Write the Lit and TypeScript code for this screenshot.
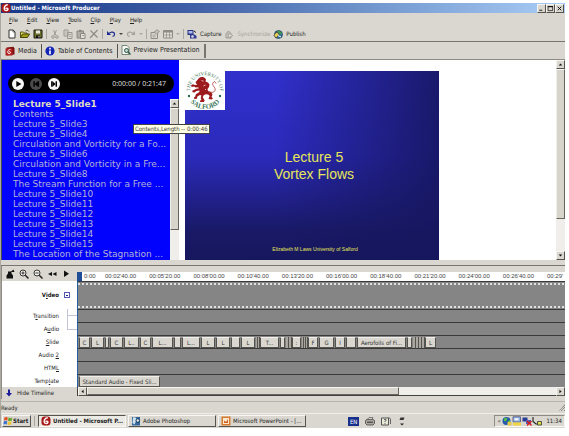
import { LitElement, html, css, svg, nothing } from "lit";
import { customElement, property } from "lit/decorators.js";
import { classMap } from "lit/directives/class-map.js";
import { styleMap } from "lit/directives/style-map.js";

const icons: Record<string, unknown> = {
  app: svg`<rect x="0.5" y="0.5" width="9" height="9" rx="3" fill="#a81818"/><path d="M6.8 1.8C4 2 3 4 3.2 6c.2 2 3.600 2 3.800.2C7 4.800 5 4.800 4.600 5.800" fill="none" stroke="#fff" stroke-width="1.400"/>`,
  doc: svg`<path d="M2 1h4.200L8 3v6H2z" fill="#fff" stroke="#333"/><path d="M6 1v2h2" fill="none" stroke="#333" stroke-width=".7"/>`,
  open: svg`<path d="M.5 8.500V3h3l1 1H7v1.500" fill="#e8e070" stroke="#555510"/><path d="M.5 8.500 2.500 5h7L7.500 8.500z" fill="#a0a018" stroke="#444408"/><path d="M5.500 2C6.500.8 8 1 8.800 2.600" fill="none" stroke="#222" stroke-width=".8"/>`,
  save: svg`<path d="M1 1h8v8H1z" fill="#6a7028" stroke="#1c1c10"/><path d="M3 1.500h4v3H3z" fill="#e8e8e0"/><path d="M3 6.500h4V9H3z" fill="#111"/><path d="M5.500 7h1v1.500h-1z" fill="#ddd"/>`,
  cut: svg`<path d="M3.500 1 6 6.500M6.500 1 4 6.500" stroke="#9d9b94" fill="none"/><circle cx="3" cy="8" r="1.300" fill="none" stroke="#9d9b94"/><circle cx="7" cy="8" r="1.300" fill="none" stroke="#9d9b94"/>`,
  copy: svg`<path d="M1 1h4v6H1zM4.500 3.500H9v6H4.500z" fill="#d9d7cf" stroke="#98968f"/><path d="M2 3h1.500M2 5h1.500M6 5.500h2M6 7.500h2" stroke="#98968f" stroke-width=".7"/>`,
  paste: svg`<path d="M1 2h6.500v7H1z" fill="#b0aea6" stroke="#8a8880"/><path d="M3 .8h2.500v2H3z" fill="#8a8880"/><path d="M4.500 4.500H9v5H4.500z" fill="#e0ded6" stroke="#8a8880"/><path d="M6 6.500h2" stroke="#8a8880" stroke-width=".7"/>`,
  del: svg`<path d="M1.500 1.500 8.500 8.500M8.500 1 1 9" stroke="#8e8c86" stroke-width="1.200"/>`,
  undo: svg`<path d="M1 2v4h4z" fill="#1c2a8c"/><path d="M3 4.500C5 2 8.800 3 8.500 5.500 8.400 6.800 7.500 7.300 6.500 7.500" fill="none" stroke="#1c2a8c" stroke-width="1.200"/>`,
  redo: svg`<path d="M9 2v4H5z" fill="#a3a199"/><path d="M7 4.500C5 2 1.200 3 1.500 5.500 1.600 6.800 2.500 7.300 3.500 7.500" fill="none" stroke="#a3a199" stroke-width="1.200"/>`,
  props: svg`<path d="M1 3.500h6.500v6H1z" fill="#d9d7cf" stroke="#8e8c86"/><path d="M4 3 7 .8 9.500 2.500 6.500 5z" fill="#c5c3bb" stroke="#8e8c86" stroke-width=".8"/><path d="M2.500 6h3M2.500 7.700h3" stroke="#8e8c86" stroke-width=".7"/>`,
  view: svg`<path d="M.5 1.500h9v7.500h-9z" fill="#e2e0d8" stroke="#8e8c86"/><path d="M.5 1.500h9v2h-9z" fill="#8e8c86"/><path d="M3.500 3v6M6.500 3v6M.5 6h9" stroke="#8e8c86" stroke-width=".7"/>`,
  capture: svg`<path d="M.5 1h6v5h-6z" fill="#24307c"/><path d="M1.500 2h4v2.500h-4z" fill="#a8b8f0"/><path d="M3 5.500h4.500L9.500 7v2.500H3z" fill="#303a90"/><circle cx="5.500" cy="7.500" r="1.300" fill="#dde"/><path d="M7 2 9 3.500" stroke="#222"/>`,
  sync: svg`<path d="M2 9V4.500L4.500 2 7 4.500V9z" fill="#c2c0b8" stroke="#a09e96"/><path d="M4.500 4.500 9 6.500 4.500 8.500z" fill="#e4e2da" stroke="#a09e96" stroke-width=".7"/>`,
  publish: svg`<circle cx="5.500" cy="5.500" r="4" fill="#3575a8" stroke="#203848" stroke-width=".7"/><path d="M4 2C6 1 9 3 9 5L6 5.500z" fill="#42944c"/><path d="M.8 6 4 3l2 2.500-3 3.700z" fill="#e9d254" stroke="#333" stroke-width=".7"/><path d="M5 6.500 8 8" stroke="#fff"/>`,
  media: svg`<path d="M1.500 1.500 8.500.8 9.500 2.500v6l-8 1z" fill="#7c1010"/><path d="M.5 2.500h7v7h-7z" fill="#b32020"/><path d="M5.500 3.500C3.500 3.500 2.500 5 2.700 6.500c.3 1.500 2.800 1.300 2.800 0 0-1-1.500-1-1.800-.2" fill="none" stroke="#fff"/>`,
  info: svg`<circle cx="5" cy="5" r="4.600" fill="#1424b4"/><path d="M5 1.800v1.700M5 4.500V8.200" stroke="#fff" stroke-width="1.600"/>`,
  preview: svg`<path d="M1 .5h5L8 2.500v7H1z" fill="#f5f8f5" stroke="#56705c" stroke-width=".8"/><circle cx="5.500" cy="5.500" r="2" fill="#bcd8cc" stroke="#2b5444"/><path d="m7 7 2.500 2.500" stroke="#2b5444" stroke-width="1.300"/>`,
  pin: svg`<path d="M3 2.500h3.500v2L8 6.500v3H1.500v-3L3 4.500z" fill="#111"/><path d="m5.500 3 3-2.500L9.500 3z" fill="#111"/>`,
  zoomin: svg`<circle cx="4" cy="4" r="3" fill="#f2f1ec" stroke="#222" stroke-width=".9"/><path d="m6.300 6.300 3.200 3.200" stroke="#222" stroke-width="1.500"/><path d="M2.400 4h3.200M4 2.400v3.200" stroke="#222" stroke-width=".9"/>`,
  zoomout: svg`<circle cx="4" cy="4" r="3" fill="#f2f1ec" stroke="#222" stroke-width=".9"/><path d="m6.300 6.300 3.200 3.200" stroke="#222" stroke-width="1.500"/><path d="M2.400 4h3.200" stroke="#222" stroke-width=".9"/>`,
  rewind: svg`<path d="M5 3v4L1 5zM9.500 3v4L5.500 5z" fill="#111"/>`,
  fwd: svg`<path d="M3 1.500v6.500L8 4.800z" fill="#111"/>`,
  start: svg`<path d="M1.500 1.500Q3 .6 4.800 1.400L4.300 4.500Q2.500 3.800 1 4.600z" fill="#e2512a"/><path d="M5.500 1.600Q7.500 2.300 9.300 1.400L8.800 4.500Q7 5.400 5 4.700z" fill="#65a935"/><path d="M.9 5.300Q2.500 4.600 4.200 5.200L3.700 8.500Q2 7.700.4 8.500z" fill="#3975d2"/><path d="M4.900 5.400Q6.500 6.200 8.600 5.300L8.100 8.500Q6.500 9.500 4.400 8.600z" fill="#efc435"/>`,
  ps: svg`<path d="M1 1h8v8.500H1z" fill="#34689c"/><path d="M2 1.500C4 .5 6 2 5.500 4L3.500 8.500 1.500 7z" fill="#cfe2f0"/><circle cx="6.800" cy="4.500" r="1.800" fill="#dfe9ef" stroke="#173450"/>`,
  ppt: svg`<path d="M.5.500h9v9h-9z" fill="#d97a2c"/><path d="M2 2h6v6H2z" fill="#fbe9d4"/><path d="M3 7V4.500L5 6l2-3v4z" fill="#d0601c"/>`,
  printer: svg`<path d="M2.500 3.500 4 1.500h4L7 3.500z" fill="#eee" stroke="#555" stroke-width=".7"/><path d="M.5 4.500 2 3.300h6L9.500 4.500v3L8 9H2L.5 7.500z" fill="#aaa89f" stroke="#444" stroke-width=".8"/><path d="M2 6.200h6" stroke="#333"/>`,
  help: svg`<path d="M.5 2h7v7h-7z" fill="#e8ead4" stroke="#555"/><path d="M3 4q.5-1 1.700-.6 1 .8-.7 2v.6M4 7.300v.9" stroke="#445" fill="none"/><path d="M7.500 1 9.500 3v5" fill="none" stroke="#666"/>`,
  more: svg`<path d="M3.500 1.500h4L6.500 4h-4z" fill="#333"/><path d="M3 7.500h4L5 9.500z" fill="#222"/>`,
  globe: svg`<circle cx="4.500" cy="5" r="4" fill="#2457b0"/><path d="M2 2.500Q4 1 5.500 2.500L4 5.500 2 5zM6 5l2-1v3L6 8z" fill="#55bb45"/><path d="M5.500 6H9.500v3.500h-4z" fill="#e6c94b"/>`,
  monitor: svg`<path d="M1 .8h7.500V6H1z" fill="#8cb4e4" stroke="#668"/><path d="M1 6.500h8v3H1z" fill="#efd744"/><path d="M2.500 2h4v2.500h-4z" fill="#e9f1fa"/>`,
  net: svg`<path d="M.5 1.500h5v4h-5z" fill="#283c94"/><path d="M4 4h5v4H4z" fill="#5060b4"/><path d="m5 5 4.500 4.500M9.500 5 5 9.500" stroke="#d81c1c" stroke-width="1.400"/>`,
  plug: svg`<path d="M1 1v4.500L4 8h3" fill="none" stroke="#222" stroke-width="1.100"/><path d="M5.500 5.500h4v3.500h-4z" fill="#dce04c" stroke="#333" stroke-width=".8"/>`,
  play: svg`<circle cx="5" cy="5" r="5" fill="#f6f6f6"/><path d="M3.600 2.400v5.200L7.800 5z" fill="#000"/>`,
  prev: svg`<circle cx="5" cy="5" r="5" fill="#4b4b4b"/><path d="M2.800 2.700h1.200v4.600H2.800zM6.400 2.700h1.200v4.600H6.400z" fill="#000"/><path d="M6.500 2.700v4.600L3.800 5z" fill="#000"/>`,
  next: svg`<circle cx="5" cy="5" r="5" fill="#f6f6f6"/><path d="M2.600 2.700h1.200v4.600H2.600zM6.300 2.700h1.200v4.600H6.300z" fill="#000"/><path d="M3.700 2.700v4.600L6.400 5z" fill="#000"/>`,
  hide: svg`<path d="M4 1.500h2v3.500h2L5 8.500 2 5h2z" fill="#1c1c9c"/>`,
  min: svg`<path d="M2 7.500h4" stroke="#111" stroke-width="1.300"/>`,
  max: svg`<path d="M1.500 2.500h6.500v5.500H1.500z" fill="none" stroke="#111"/><path d="M1 2.200h7.500" stroke="#111" stroke-width="1.400"/>`,
  close: svg`<path d="m2.500 2.500 5 5M7.500 2.500l-5 5" stroke="#111" stroke-width="1.400"/>`,
  up: svg`<path d="M5 3.500 7.500 6.500h-5z" fill="#111"/>`,
  down: svg`<path d="M5 6.500 7.500 3.500h-5z" fill="#111"/>`,
  left: svg`<path d="M3.500 5 6.500 2.500v5z" fill="#111"/>`,
  right: svg`<path d="M6.500 5 3.500 2.500v5z" fill="#111"/>`,
};

@customElement("px-icon")
class PxIcon extends LitElement {
  @property() name = "";
  static styles = css`
    :host { display: inline-flex; flex: none; width: 10px; height: 10px; }
    svg { width: 100%; height: 100%; display: block; }
  `;
  render() {
    return html`<svg viewBox="0 0 10 10" aria-hidden="true">${icons[this.name]}</svg>`;
  }
}

@customElement("salford-crest")
class SalfordCrest extends LitElement {
  static styles = css`
    :host { display: block; width: 40px; height: 39px; background: #fff; }
    svg { display: block; width: 100%; height: 100%; }
    text { font-family: "Liberation Serif", serif; fill: #3f7a5c; }
  `;
  render() {
    return html`<svg viewBox="0 0 40 39" role="img" aria-label="University of Salford">
      <defs>
        <path id="top" d="M5.500 23A15 15 0 1 1 34.500 23"/>
        <path id="bottom" d="M3 24A17 14 0 0 0 37 24"/>
      </defs>
      <text font-size="5"><textPath href="#top" startOffset="50%" text-anchor="middle">THE UNIVERSITY OF</textPath></text>
      <text font-size="7" font-weight="bold"><textPath href="#bottom" startOffset="50%" text-anchor="middle">SALFORD</textPath></text>
      <circle cx="4" cy="25" r="1.200" fill="#2f6a4c"/><circle cx="35" cy="25" r="1.200" fill="#2f6a4c"/>
      <path d="M14 7l2-1 2 0 2 1 1 1.500-.5 2 2.500 1 1.500 2-.5 2.500-1.500 2 .5 2 3 1 1.500 2.500-1 2.500 1.500 1.500-1.500 1-3-.5.500-1.500.7-1.500-1.500-1.500-2.500-.3-2 1-1 2 1 1.500 1 2-1 1.200-3.500 0-.3-1.200 1.500-.6-.7-2 .7-2.700-1.500-.3-2.500 1.500-.5 2.200-2.500.3-.5-1.300 1.300-1.200.7-2.300 3.500-2.200 0-1.500-3 .5-2 1.500-1.800-.3-.4-1.600 1.700-.7 2.300-1.300 2.500-.2-.5-1.200-2.500.2-1.500-1-2.500.5-.7-1.500 1.700-1.300 2.500.8 2-.3-1-1.300-.7-1.200z" fill="#9c1a1d"/>
      <path d="M24 21c5 1.500 7.500-1.500 5.500-4.500s-3-4 0-6l1.500 2" fill="none" stroke="#b04a48" stroke-width=".9"/>
      <path d="M16.500 9.500l2 .7M18.500 15l2-1M20 18l1 1" stroke="#fff" stroke-width=".7"/>
    </svg>`;
  }
}

const menus = ["File", "Edit", "View", "Tools", "Clip", "Play", "Help"];

const slides = [
  "Lecture 5_Slide1", "Contents", "Lecture 5_Slide3", "Lecture 5_Slide4",
  "Circulation and Vorticity for a Fo...", "Lecture 5_Slide6",
  "Circulation and Vorticity in a Fre...", "Lecture 5_Slide8",
  "The Stream Function for a Free ...", "Lecture 5_Slide10",
  "Lecture 5_Slide11", "Lecture 5_Slide12", "Lecture 5_Slide13",
  "Lecture 5_Slide14", "Lecture 5_Slide15", "The Location of the Stagnation ...",
];

const marks = ["02'40.00", "05'20.00", "08'00.00", "10'40.00", "13'20.00", "16'00.00", "18'40.00", "21'20.00", "24'00.00", "26'40.00", "29'"];

/** Clips of the slide track: caption and length on the time scale. */
const clips: [string, number][] = [
  ["C", 12], ["L", 14], ["", 5], ["C", 14], ["L..", 16], ["C", 12], ["L...", 22],
  ["", 8], ["L...", 19], ["L", 15], ["L", 15], ["", 10], ["L", 15], ["", 2], ["", 2],
  ["T...", 20], ["", 6], ["", 3], ["", 3], [":", 10], ["", 2], ["", 2], ["", 2],
  ["F", 11], ["G", 16], ["I", 11], ["", 11], ["Aerofoils of Fi...", 50],
  ["", 6], ["", 3], ["", 3], ["", 3], ["", 3], ["L", 12],
];

@customElement("app-root")
class AppRoot extends LitElement {
  static styles = css`
    :host {
      display: block; background: #fff; min-height: 100vh; padding: 3px 4px 0 0;
      box-sizing: border-box; overflow: hidden; color: #222;
      font: 7px/10px "DejaVu Sans Condensed", "DejaVu Sans", sans-serif;
    }
    * { box-sizing: border-box; }
    button {
      font: inherit; color: inherit; background: none; border: 0; padding: 0; margin: 0;
      display: inline-flex; align-items: center; white-space: nowrap; text-align: left;
    }
    ul { list-style: none; margin: 0; padding: 0; }
    h1, h2, p { margin: 0; font-weight: normal; }
    .small { font-size: 6px; }
    .window { background: #d9d7cf; border-left: 1px solid #aaa89f; }
    .title {
      display: flex; align-items: center; height: 10px; padding-right: 1px; color: #fff;
      background: linear-gradient(90deg, #17388a, #3d5da4 32%, #7399cf 67%, #a9cdf6);
    }
    .title h1 { flex: 1; font-size: 6px; line-height: 10px; font-weight: bold; }
    .caps { display: flex; }
    .caps button, .sb button {
      width: 9px; height: 9px; background: #d9d7cf; justify-content: center;
      border: 1px solid; border-color: #f6f5f0 #55534e #55534e #f6f5f0;
    }
    .caps px-icon { width: 7px; height: 7px; }
    .menu { display: flex; gap: 9px; height: 14px; padding-left: 8px; align-items: center; }
    .menu u, .label u { text-decoration-thickness: 1px; text-underline-offset: 1px; }
    .tools {
      display: flex; align-items: center; height: 15px; gap: 3px; padding-left: 6px;
      border-bottom: 1px solid #77756f;
    }
    .tools button { gap: 3px; }
    .sep { width: 1px; height: 10px; background: #a9a79f; }
    .caret { width: 4px; height: 2px; background: #444; clip-path: polygon(0 0, 100% 0, 50% 100%); }
    .off { color: #a6a49c; }
    .dim { background: #aaa89f; }
    .tabs { display: flex; align-items: center; height: 18px; padding-left: 1px; border-bottom: 1px solid #8e8c86; }
    .tab { gap: 3px; height: 14px; padding: 0 4px 0 3px; border-right: 1px solid #55534e; }
    .tab.on { padding-bottom: 2px; border-right-width: 2px; border-right-color: #77756f; }
    .main { display: flex; border-left: 1px solid #4a4a55; background: #fff; position: relative; }
    .side { width: 177px; background: #0101fe; display: flex; flex-direction: column; padding-top: 14px; }
    .player {
      display: flex; align-items: center; gap: 6px; height: 19px; margin: 0 5px 6px 6px;
      padding: 0 8px 0 4px; border-radius: 10px; background: #000; color: #ddd;
    }
    .player px-icon { width: 12px; height: 12px; }
    .player time { margin-left: auto; font: 7px/10px "Noto Sans", sans-serif; }
    .listbox { display: flex; flex: 1; }
    .list { flex: 1; min-width: 0; padding: 0 0 1px 11px; font: 9px/10px "DejaVu Sans", sans-serif; color: #b4b4d2; }
    .list li { display: flex; height: 10px; }
    .list .cur { font-weight: bold; color: #dedcc0; }
    .sb { display: flex; flex-direction: column; width: 9px; background: #efeeea; }
    .sb px-icon { width: 7px; height: 7px; }
    .thumb { background: #d6d4cb; border: 1px solid; border-color: #f6f5f0 #66645e #66645e #f0efe9; flex: 122; }
    .rest { flex: 30; }
    .stage { flex: 1; padding: 11px 0 0 6px; }
    .slide {
      width: 254px; aspect-ratio: 254 / 189; position: relative; color: #e6e65a;
      display: flex; flex-direction: column; align-items: center; font-family: "Liberation Sans", sans-serif;
      background: linear-gradient(90deg, #0000 35%, #16165ee0), linear-gradient(180deg, #3130cc, #2b2abb 45%, #191966 85%, #17175e);
    }
    .slide h2 { margin-top: 78px; padding-left: 4px; text-align: center; font-size: 14px; line-height: 17px; }
    .slide p { margin: auto 0 6px; padding-left: 6px; font-size: 5px; line-height: 10px; }
    .crest { position: absolute; left: 0; top: 0; }
    .view .thumb { flex: 150; }
    .view .rest { flex: 33; }
    .tip {
      position: absolute; left: 131px; top: 64px; height: 10px; padding: 0 1px; white-space: nowrap;
      background: #ffffe6; border: 1px solid #444; line-height: 8px; color: #333;
    }
    .split { height: 6px; border-bottom: 1px solid #77756f; }
    .timeline { display: grid; grid-template-columns: 75px minmax(0, 1fr); border-left: 1px solid #8e8c86; }
    .ttools { display: flex; align-items: center; gap: 4px; padding-left: 3px; height: 15px; }
    .ruler {
      display: grid; grid-template-columns: 28px repeat(10, 1fr) 18px; margin-top: 6px;
      background: #fff; color: #444; font: 6px/9px "Liberation Sans", sans-serif; white-space: nowrap;
    }
    .head { display: flex; gap: 2px; }
    .head::before { content: ""; width: 5px; background: #1f4d98; }
    .label {
      display: grid; grid-template-columns: 57px 18px; background: #fff; height: 13px;
      align-items: center; text-align: right;
    }
    .label.video { height: 28px; font-weight: bold; }
    .tree { align-self: stretch; margin-left: 8px; border-left: 1px solid #c4c4d8; display: flex; align-items: center; }
    .tree::after { content: ""; flex: 1; height: 1px; background: #c4c4d8; }
    .tree.end { align-self: start; height: 8px; align-items: end; }
    .box { width: 6px; height: 6px; margin-left: 5px; border: 1px solid #5555b4; display: flex; align-items: center; justify-content: center; }
    .box::before { content: ""; width: 2px; height: 1px; background: #222288; }
    .track {
      display: flex; height: 13px; background: #858585; border-top: 1px solid #3a3a3a;
      border-left: 1px solid #2360a4; overflow: hidden; padding: 1px 0 0 1px;
    }
    .track.video { height: 28px; flex-direction: column; justify-content: space-between; padding: 1px 0; }
    .track.video::before, .track.video::after {
      content: ""; height: 2px; background: repeating-linear-gradient(90deg, #e0e0e0 0 2px, #858585 2px 4px);
    }
    .clip {
      flex: none; height: 11px; background: #d9d7cf; border: 1px solid #55534e; border-top-color: #f0efe9;
      color: #333; justify-content: center; margin-right: 1px;
    }
    .clip.thin { background: #a9a7a0; margin: 0; border-width: 0 1px 0 0; }
    .clip.wide { width: 81px; }
    .hide { height: 12px; gap: 3px; padding-left: 2px; align-self: start; }
    .hsb { flex-direction: row; width: auto; height: 9px; border-bottom: 1px solid #44423e; border-left: 1px solid #44423e; }
    .hsb .thumb { flex: 313; }
    .hsb .rest { flex: 158; }
    .status {
      display: flex; justify-content: space-between; align-items: center; height: 13px; margin-top: 2px;
      border-top: 1px solid #b6b4ac; border-bottom: 1px solid #efeee8;
    }
    .grip { width: 6px; height: 7px; background: repeating-linear-gradient(135deg, #8e8c86 0 1px, #d9d7cf 1px 2px); clip-path: polygon(100% 0, 100% 100%, 0 100%); }
    .task { display: flex; align-items: center; height: 14px; gap: 2px; padding-left: 1px; }
    .task button {
      height: 12px; gap: 2px; padding: 0 2px; width: 88px;
      border: 1px solid; border-color: #f8f7f3 #55534e #55534e #f8f7f3;
    }
    .task .start { width: 29px; padding: 0; font-weight: bold; gap: 0; }
    .task .on { font-weight: bold; background: #eceae5; border-color: #55534e #f8f7f3 #f8f7f3 #55534e; }
    .task .sep { margin: 0 1px; }
    .bar { display: flex; align-items: center; gap: 6px; margin-left: auto; }
    .en { background: #17308c; color: #fff; padding: 0 2px; line-height: 9px; }
    .tray {
      display: flex; align-items: center; height: 12px; margin-left: 85px; padding: 0 2px;
      border: 1px solid; border-color: #8e8c86 #f8f7f3 #f8f7f3 #8e8c86;
    }
    .tray time { margin-left: 4px; }
  `;

  private tool(name: string, text = "", off = false) {
    return html`<button class=${classMap({ off, small: true })} aria-label=${text || name} ?disabled=${off}>
      <px-icon name=${name}></px-icon>${text}</button>`;
  }

  private row(before: string, key: string, after: string, tree: unknown, track: unknown = nothing) {
    return html`<div class="label small"><span>${before}<u>${key}</u>${after}</span>${tree}</div>
      <div class="track small">${track}</div>`;
  }

  private scroll(a: string, b: string, cls = "") {
    return html`<div class="sb ${cls}">
      <button aria-label=${a}><px-icon name=${a}></px-icon></button>
      <div class="thumb"></div><div class="rest"></div>
      ${b ? html`<button aria-label=${b}><px-icon name=${b}></px-icon></button>` : nothing}
    </div>`;
  }

  render() {
    const sep = html`<span class="sep"></span>`;
    return html`<div class="window">
      <header class="title">
        <px-icon name="app"></px-icon><h1>Untitled - Microsoft Producer</h1>
        <div class="caps">
          ${["min", "max", "close"].map((n) => html`<button aria-label=${n}><px-icon name=${n}></px-icon></button>`)}
        </div>
      </header>
      <nav class="menu small">
        ${menus.map((m) => html`<button><span><u>${m[0]}</u>${m.slice(1)}</span></button>`)}
      </nav>
      <div class="tools">
        ${this.tool("doc")}${this.tool("open")}${this.tool("save")}${sep}
        ${this.tool("cut")}${this.tool("copy")}${this.tool("paste")}${this.tool("del")}${sep}
        ${this.tool("undo")}<span class="caret"></span>${this.tool("redo")}<span class="caret dim"></span>${sep}
        ${this.tool("props")}${this.tool("view")}<span class="caret dim"></span>${sep}
        ${this.tool("capture", "Capture")}${this.tool("sync", "Synchronize", true)}${this.tool("publish", "Publish")}
      </div>
      <nav class="tabs">
        <button class="tab"><px-icon name="media"></px-icon>Media</button>
        <button class="tab"><px-icon name="info"></px-icon>Table of Contents</button>
        <button class="tab on"><px-icon name="preview"></px-icon>Preview Presentation</button>
      </nav>

      <main class="main">
        <section class="side">
          <div class="player">
            <button aria-label="Play"><px-icon name="play"></px-icon></button>
            <button aria-label="Previous"><px-icon name="prev"></px-icon></button>
            <button aria-label="Next"><px-icon name="next"></px-icon></button>
            <time>0:00:00 / 0:21:47</time>
          </div>
          <div class="listbox">
            <ul class="list">
              ${slides.map((s, i) => html`<li><button class=${classMap({ cur: i === 0 })}>${s}</button></li>`)}
            </ul>
            ${this.scroll("up", "")}
          </div>
        </section>
        <section class="stage">
          <article class="slide">
            <salford-crest class="crest"></salford-crest>
            <h2>Lecture 5<br>Vortex Flows</h2>
            <p>Elizabeth M Laws University of Salford</p>
          </article>
        </section>
        ${this.scroll("up", "down", "view")}
        <div class="tip small" role="tooltip">Contents,Length -- 0:00:46</div>
      </main>
      <div class="split"></div>

      <section class="timeline">
        <div class="ttools">
          ${["pin", "zoomin", "zoomout", "rewind", "fwd"].map((n) => this.tool(n))}
        </div>
        <div class="ruler">
          <span class="head">0:00</span>${marks.map((m) => html`<span>00:${m}</span>`)}
        </div>
        <div class="label video small"><span>V<u>i</u>deo</span><span class="box"></span></div>
        <div class="track video"></div>
        ${this.row("T", "r", "ansition", html`<span class="tree"></span>`)}
        ${this.row("A", "u", "dio", html`<span class="tree end"></span>`)}
        ${this.row("", "S", "lide", nothing, clips.map(([t, w]) => html`<button
          class=${classMap({ clip: true, thin: w < 4 })} style=${styleMap({ width: `${w - (w < 4 ? 0 : 1)}px` })}>${t}</button>`))}
        ${this.row("Audio ", "2", "", nothing)}
        ${this.row("HTM", "L", "", nothing)}
        ${this.row("Temp", "l", "ate", nothing, html`<button class="clip wide">Standard Audio - Fixed Sli...</button>`)}
        <button class="hide small"><px-icon name="hide"></px-icon>Hide Timeline</button>
        ${this.scroll("left", "right", "hsb")}
      </section>

      <div class="status small"><span>Ready</span><span class="grip"></span></div>
      <footer class="task small">
        <button class="start"><px-icon name="start"></px-icon>Start</button>${sep}
        <button class="on"><px-icon name="app"></px-icon>Untitled - Microsoft P...</button>
        <button><px-icon name="ps"></px-icon>Adobe Photoshop</button>
        <button><px-icon name="ppt"></px-icon>Microsoft PowerPoint - [...</button>
        <div class="bar"><span class="en">EN</span><px-icon name="printer"></px-icon><px-icon name="help"></px-icon><px-icon name="more"></px-icon></div>
        <div class="tray"><span>«</span>&nbsp;<px-icon name="globe"></px-icon><px-icon name="monitor"></px-icon><px-icon name="net"></px-icon><px-icon name="plug"></px-icon><time>11:34</time></div>
      </footer>
    </div>`;
  }
}
